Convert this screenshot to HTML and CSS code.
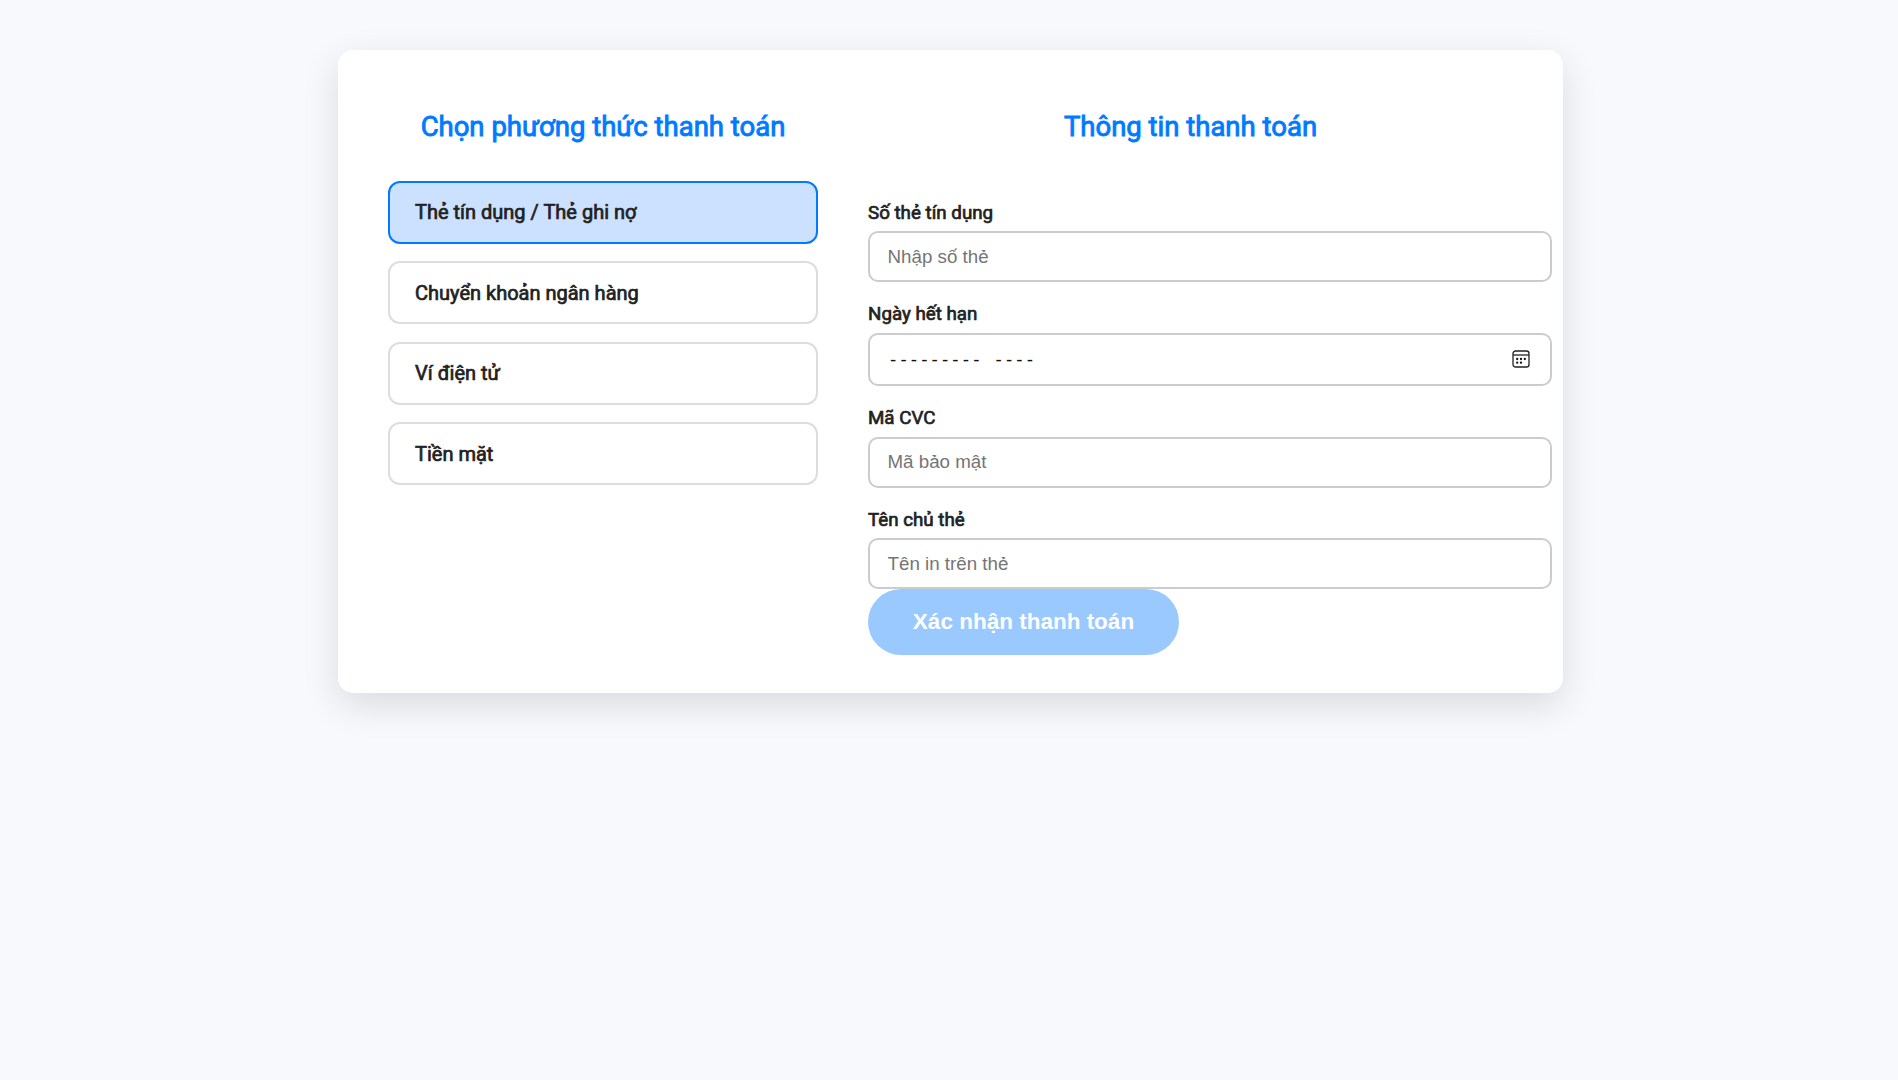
FILE: index.html
```html
<!DOCTYPE html>
<html lang="vi">
<head>
<meta charset="utf-8">
<title>Thanh toán</title>
<link rel="stylesheet" href="styles.css">
</head>
<body>
<main class="card">
  <section class="methods">
    <h2 class="title">Chọn phương thức thanh toán</h2>
    <div class="options">
      <div class="option selected">Thẻ tín dụng / Thẻ ghi nợ</div>
      <div class="option">Chuyển khoản ngân hàng</div>
      <div class="option">Ví điện tử</div>
      <div class="option">Tiền mặt</div>
    </div>
  </section>
  <section class="details">
    <h2 class="title">Thông tin thanh toán</h2>
    <form class="form">
      <label class="label first" for="number">Số thẻ tín dụng</label>
      <input class="input" id="number" type="text" placeholder="Nhập số thẻ">
      <span class="label">Ngày hết hạn</span>
      <div class="input month">
        <span class="dashes"><span>---------</span><span>----</span></span>
        <svg class="calendar" viewBox="0 0 18 18" width="18" height="18">
          <rect x="1" y="1" width="16" height="16" rx="2.6" fill="none" stroke="#222" stroke-width="1.3"/>
          <path d="M1 5h16" stroke="#222" stroke-width="1.3"/>
          <g fill="#111"><circle cx="5.2" cy="9" r="1.15"/><circle cx="9" cy="9" r="1.15"/><circle cx="12.8" cy="9" r="1.15"/><circle cx="5.2" cy="12.7" r="1.15"/><circle cx="9" cy="12.7" r="1.15"/></g>
        </svg>
      </div>
      <label class="label" for="cvc">Mã CVC</label>
      <input class="input code" id="cvc" type="text" placeholder="Mã bảo mật">
      <label class="label owner" for="owner">Tên chủ thẻ</label>
      <input class="input last" id="owner" type="text" placeholder="Tên in trên thẻ">
      <button class="submit" type="button">Xác nhận thanh toán</button>
    </form>
  </section>
</main>
</body>
</html>
```
FILE: styles.css
```css
* { box-sizing: border-box; }
body {
  margin: 0;
  min-height: 100vh;
  padding-top: 50px;
  background: #f7f9fd;
  color: #222;
  font-family: Roboto, "Noto Sans", sans-serif;
}
.card {
  display: flex;
  gap: 50px;
  width: 1225px;
  height: 643px;
  margin: 0 auto 0 338px;
  padding: 50px;
  background: #fff;
  border-radius: 15px;
  box-shadow: 0 12px 37px rgba(0, 0, 0, .12);
}
.methods { width: 430px; flex: none; }
.details { width: 645px; flex: none; }
.title {
  margin: 0;
  padding-top: 8px;
  height: 81px;
  color: #007bff;
  font-size: 27.5px;
  font-weight: 400;
  -webkit-text-stroke: .9px currentColor;
  line-height: 38px;
  text-align: center;
  white-space: nowrap;
}
.options { display: grid; gap: 17.4px; }
.option {
  height: 63px;
  padding: 0 25px;
  border: 2px solid #ddd;
  border-radius: 12px;
  font-size: 20px;
  -webkit-text-stroke: .7px currentColor;
  line-height: 59px;
}
.option:nth-child(even) { padding-top: 1px; }
.selected { background: #cce0ff; border-color: #007bff; }
.form { display: flex; flex-direction: column; width: 684px; padding-top: 18px; }
.label {
  height: 33px;
  font-size: 18.75px;
  -webkit-text-stroke: .7px currentColor;
  line-height: 28px;
}
.first, .owner { height: 32px; }
.input {
  height: 51px;
  width: 684px;
  margin: 0 0 18px;
  padding: 0 17.5px;
  border: 2px solid #ccc;
  border-radius: 10px;
  background: #fff;
  font-family: "Liberation Sans", Arial, sans-serif;
  font-size: 18.75px;
}
.input::placeholder { color: #757575; }
.month { display: flex; align-items: center; justify-content: space-between; height: 53px; color: #111; }
.dashes { display: flex; gap: 12px; letter-spacing: 4.15px; padding-left: 2.5px; }
.calendar { margin: 0 3px 1px 0; }
.code { padding-bottom: 2px; }
.last { margin-bottom: 0; }
.submit {
  width: 311px;
  height: 66px;
  padding: 0;
  border: 0;
  border-radius: 33px;
  background: #99c9ff;
  color: #fff;
  font: bold 22.5px "Liberation Sans", Arial, sans-serif;
}
```
